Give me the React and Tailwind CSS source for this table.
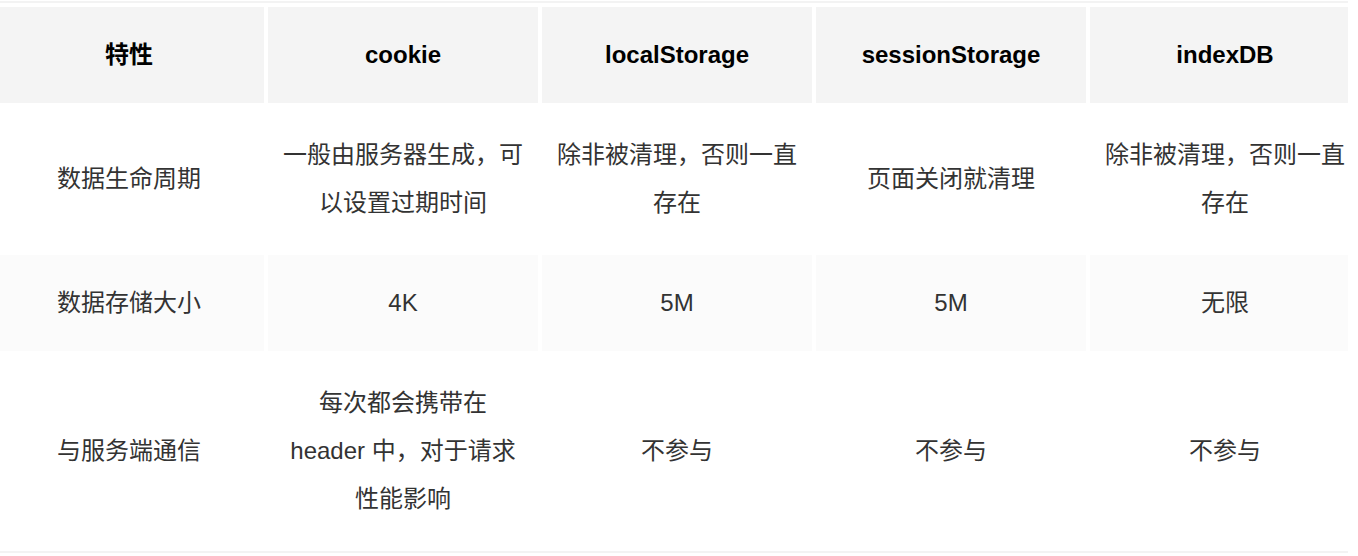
import React from "react";

const rows = [
  {
    bg: "bg-white",
    cells: [["数据生命周期"], ["一般由服务器生成，可", "以设置过期时间"], ["除非被清理，否则一直", "存在"], ["页面关闭就清理"], ["除非被清理，否则一直", "存在"]],
  },
  {
    bg: "bg-[#fbfbfb]",
    cells: [["数据存储大小"], ["4K"], ["5M"], ["5M"], ["无限"]],
  },
  {
    bg: "bg-white",
    cells: [["与服务端通信"], ["每次都会携带在", "header 中，对于请求", "性能影响"], ["不参与"], ["不参与"], ["不参与"]],
  },
];

const headers = ["特性", "cookie", "localStorage", "sessionStorage", "indexDB"];

export default function App() {
  return (
    <div
      className="bg-white w-[1358px] h-[556px] pt-[1px]"
      style={{ fontFamily: '"Liberation Sans", "Noto Sans CJK SC", sans-serif' }}
    >
      <div className="w-[1348px] overflow-hidden border-t-2 border-b-2 border-[#f3f3f3]">
        <div className="-ml-[6px] w-[1366px] grid grid-cols-[270px_270px_270px_270px_270px] gap-[4px] py-[4px]">
          {headers.map((h, i) => (
            <div
              key={i}
              className="bg-[#f4f4f4] py-6 flex items-center justify-center text-center text-[24px] leading-[48px] font-bold text-black whitespace-nowrap"
            >
              {h}
            </div>
          ))}
          {rows.map((r, ri) =>
            r.cells.map((lines, ci) => (
              <div
                key={ri + "-" + ci}
                className={`${r.bg} py-6 flex flex-col items-center justify-center text-center text-[24px] leading-[48px] text-[#333] whitespace-nowrap`}
              >
                {lines.map((l, li) => (
                  <div key={li}>{l}</div>
                ))}
              </div>
            ))
          )}
        </div>
      </div>
    </div>
  );
}
